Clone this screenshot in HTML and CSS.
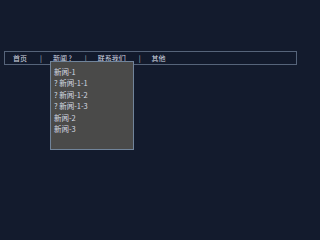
FILE: index.html
```html
<!DOCTYPE html>
<html lang="zh">
<head>
<meta charset="utf-8">
<title>导航</title>
<link rel="stylesheet" href="styles.css">
</head>
<body>
<div class="page">
  <nav class="nav">
    <div class="item">首页</div>
    <div class="sep">|</div>
    <div class="item">新闻 ?</div>
    <div class="sep">|</div>
    <div class="item">联系我们</div>
    <div class="sep">|</div>
    <div class="item">其他</div>
  </nav>
  <div class="sub">
    <div class="sub-item">新闻-1</div>
    <div class="sub-item">? 新闻-1-1</div>
    <div class="sub-item">? 新闻-1-2</div>
    <div class="sub-item">? 新闻-1-3</div>
    <div class="sub-item">新闻-2</div>
    <div class="sub-item">新闻-3</div>
  </div>
</div>
</body>
</html>
```
FILE: styles.css
```css
html, body {
  margin: 0;
  padding: 0;
  background: #131b2d;
}
body {
  font-family: "Noto Sans CJK SC", "Noto Sans", sans-serif;
  font-size: 7.5px;
  color: #d3d9e2;
}
.page {
  padding: 51px 4px 0;
  min-height: 149px;
}
.nav {
  box-sizing: border-box;
  width: 293px;
  height: 14px;
  border: 1px solid #56647a;
  line-height: 12px;
  background: #121a2c;
  display: flex;
  align-items: center;
  padding-left: 8px;
  font-size: 7px;
}
.sep {
  padding: 0 11px 0 13px;
  color: #b8c0cc;
}
.sub {
  position: relative;
  z-index: 2;
  margin: -4px 0 0 46px;
  width: 76px;
  height: 70px;
  padding: 3.5px 3px 13.5px;
  display: flex;
  flex-direction: column;
  background: #4a4a49;
  border: 1px solid #71849a;
}
.sub-item {
  height: 11.6px;
  line-height: 11.6px;
  white-space: nowrap;
}
```
